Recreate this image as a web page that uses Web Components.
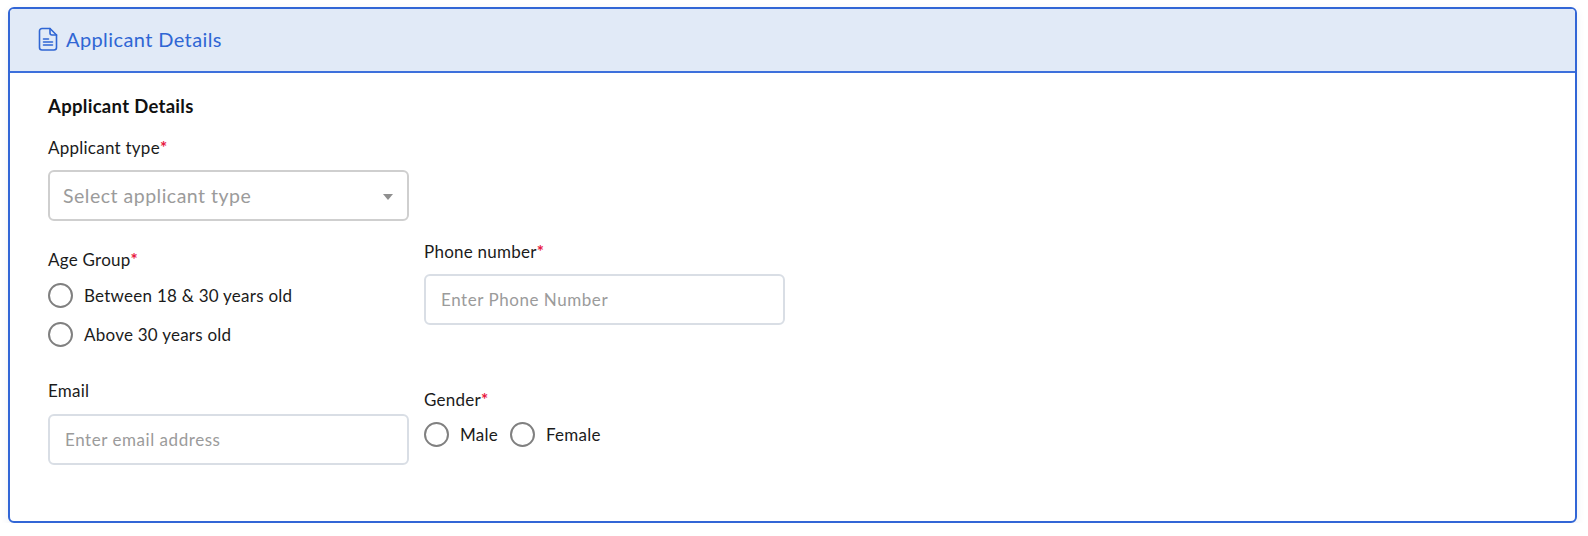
<!DOCTYPE html>
<html lang="en">
<head>
<meta charset="utf-8">
<title>Applicant Details</title>
<style>
  html, body { margin: 0; background: #fff; }
  body { padding: 7px 11px 0 8px; font: 17px/20px Lato, "Noto Sans", sans-serif; letter-spacing: .25px; color: #1b1b1b; }
  .cols { display: grid; grid-template-columns: 361px 361px; column-gap: 15px; }
  .col { display: flex; flex-direction: column; }
  .radios { display: flex; flex-direction: column; gap: 14px; }
  .radios.inline { flex-direction: row; gap: 12px; }
</style>
</head>
<body>

<template id="panel-tpl">
  <style>
    :host {
      display: block; height: 516px; box-sizing: border-box;
      border: 2px solid #3266d6; border-radius: 6px; background: #fff;
      box-shadow: 0 3px 8px rgba(40, 60, 100, .08);
    }
    header {
      display: flex; align-items: center; gap: 8px; height: 64px; box-sizing: border-box;
      padding: 0 0 2px 28px; background: #e1eaf7; border-bottom: 2px solid #3d70dc;
      border-radius: 4px 4px 0 0; color: #2f66d4; font-size: 20px; letter-spacing: .4px;
    }
    svg { display: block; }
    .body { padding: 23px 38px 0; }
    h2 { margin: 0 0 22px; font-size: 18.500px; line-height: 20px; font-weight: 700; color: #111; letter-spacing: .3px; }
  </style>
  <header>
    <svg width="20" height="24" viewBox="0 0 20 24" fill="none" stroke="#2f66d4" stroke-width="1.6" stroke-linejoin="round" stroke-linecap="round">
      <path d="M4 1.500h8l6.500 6.500v12.500a2.500 2.500 0 0 1-2.500 2.500H4a2.500 2.500 0 0 1-2.500-2.500v-16.500a2.500 2.500 0 0 1 2.500-2.500z"/>
      <path d="M12 1.500v4.500a2 2 0 0 0 2 2h4.500"/>
      <path d="M5.500 12h5M5.500 15h9M5.500 18h9"/>
    </svg>
    <span id="title"></span>
  </header>
  <div class="body">
    <h2 id="sub"></h2>
    <slot></slot>
  </div>
</template>

<template id="field-tpl">
  <style>
    :host { display: block; }
    label { display: block; line-height: 20px; color: #1b1b1b; }
    i { font-style: normal; font-weight: 700; color: #e8173f; }
  </style>
  <label><span id="text"></span><i id="req">*</i></label>
  <slot></slot>
</template>

<template id="input-tpl">
  <style>
    :host {
      display: flex; align-items: center; box-sizing: border-box; height: 51px;
      padding-left: 15px; border: 2px solid #d9dee5; border-radius: 6px;
      color: #9b9b9b; background: #fff; font-size: 17px; letter-spacing: .55px;
    }
  </style>
  <slot></slot>
</template>

<template id="select-tpl">
  <style>
    :host {
      display: flex; align-items: center; justify-content: space-between; box-sizing: border-box;
      height: 51px; padding: 0 14px 0 13px; border: 2px solid #cfcfcf; border-radius: 6px;
      color: #9b9b9b; background: #fff; font-size: 19.500px; letter-spacing: .5px;
    }
    b { width: 0; height: 0; margin-top: 3px; border: 5.500px solid transparent; border-top: 6px solid #8f8f8f; border-bottom: 0; }
  </style>
  <slot></slot><b></b>
</template>

<template id="radio-tpl">
  <style>
    :host { display: flex; align-items: center; gap: 11px; color: #1b1b1b; }
    b { width: 25px; height: 25px; box-sizing: border-box; border: 2px solid #808080; border-radius: 50%; background: #fff; flex: none; }
  </style>
  <b></b><slot></slot>
</template>

<script>
  // small helper, every element just stamps its template
  const stamp = (el, id) => {
    const root = el.attachShadow({ mode: 'open' });
    root.appendChild(document.getElementById(id).content.cloneNode(true));
    return root;
  };

  class AppPanel extends HTMLElement {
    constructor() {
      super();
      this._root = stamp(this, 'panel-tpl');
    }
    // attributes are not there yet in the constructor while the parser runs
    connectedCallback() {
      this._root.getElementById('title').textContent = this.getAttribute('heading');
      this._root.getElementById('sub').textContent = this.getAttribute('subheading');
    }
  }

  class FormField extends HTMLElement {
    constructor() {
      super();
      this._root = stamp(this, 'field-tpl');
    }
    connectedCallback() {
      this._root.getElementById('text').textContent = this.getAttribute('label');
      if (!this.hasAttribute('required')) this._root.getElementById('req')?.remove();
    }
  }

  class TextBox extends HTMLElement {
    constructor() { super(); stamp(this, 'input-tpl'); }
  }
  class SelectBox extends HTMLElement {
    constructor() { super(); stamp(this, 'select-tpl'); }
  }
  class RadioOption extends HTMLElement {
    constructor() { super(); stamp(this, 'radio-tpl'); }
  }

  customElements.define('app-panel', AppPanel);
  customElements.define('form-field', FormField);
  customElements.define('text-box', TextBox);
  customElements.define('select-box', SelectBox);
  customElements.define('radio-option', RadioOption);
</script>

<app-panel heading="Applicant Details" subheading="Applicant Details">
  <div class="cols">
    <div class="col">
      <form-field label="Applicant type" required>
        <select-box style="margin-top:12px">Select applicant type</select-box>
      </form-field>
      <form-field label="Age Group" required style="margin-top:29px">
        <div class="radios" style="margin-top:13px">
          <radio-option>Between 18 &amp; 30 years old</radio-option>
          <radio-option>Above 30 years old</radio-option>
        </div>
      </form-field>
      <form-field label="Email" style="margin-top:34px">
        <text-box style="margin-top:13px">Enter email address</text-box>
      </form-field>
    </div>
    <div class="col" style="padding-top:104px">
      <form-field label="Phone number" required>
        <text-box style="margin-top:12px">Enter Phone Number</text-box>
      </form-field>
      <form-field label="Gender" required style="margin-top:65px">
        <div class="radios inline" style="margin-top:12px">
          <radio-option>Male</radio-option>
          <radio-option>Female</radio-option>
        </div>
      </form-field>
    </div>
  </div>
</app-panel>

</body>
</html>
